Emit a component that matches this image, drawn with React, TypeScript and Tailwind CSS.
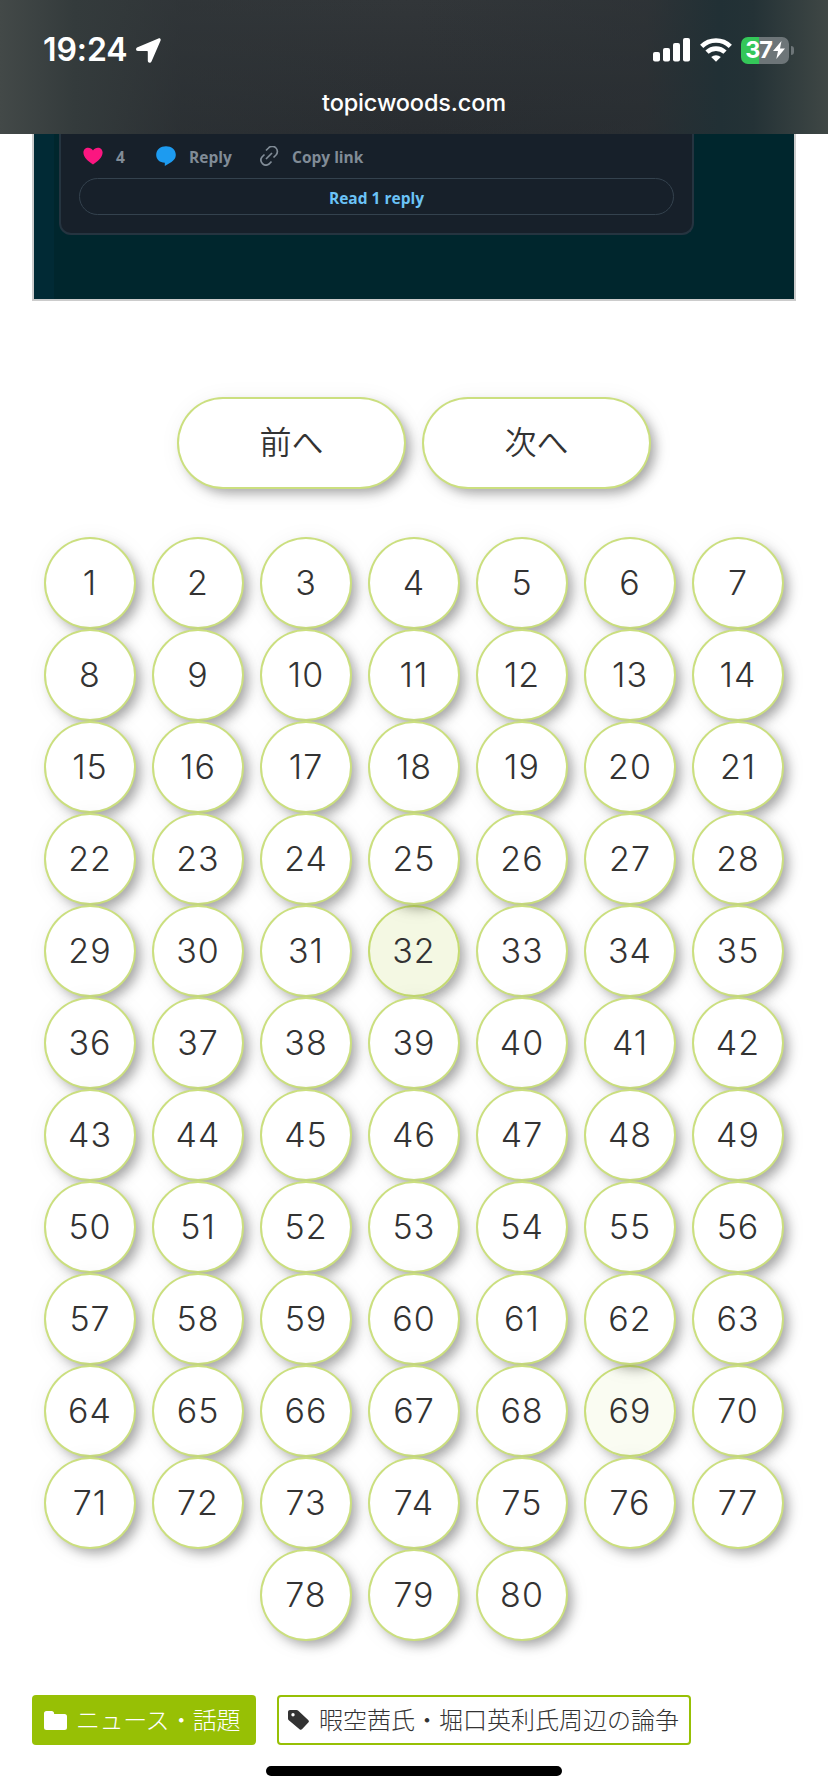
import type { ReactNode } from 'react';

interface PagerLinkProps {
  children: ReactNode;
  className: string;
}

const PAGES = Array.from({ length: 80 }, (_, i) => i + 1);
const CURRENT_PAGE = 32;
const VISITED_PAGE = 69;

const pageBackground = (page: number) => {
  if (page === CURRENT_PAGE) return 'bg-[#97c000]/11';
  if (page === VISITED_PAGE) return 'bg-[#97c000]/5';
  return 'bg-white';
};

const StatusBar = () => (
  <div className="flex h-[86px] items-center justify-between pl-[43px] pr-[34px]">
    <div className="flex items-center gap-[9px]">
      <span className="w-[84px] whitespace-nowrap text-[32px] font-semibold leading-none tracking-[-0.1px]">
        19:24
      </span>
      <svg width="25" height="25" viewBox="0 0 25 25" fill="currentColor">
        <path d="M22.400.5 1 9.600c-1.500.700-1.200 3.300.8 3.300h9c.7 0 1 .3 1 1v8.800c0 2.100 2.700 2.700 3.700.7L24.500 2.800C25.200 1.100 24.100-.2 22.400.5Z" />
      </svg>
    </div>
    <div className="flex items-center">
      <svg width="37" height="24" viewBox="0 0 37 24" fill="currentColor">
        <rect x="0" y="14" width="7" height="9.500" rx="2" />
        <rect x="10" y="10" width="7" height="13.500" rx="2" />
        <rect x="20" y="5" width="7" height="18.500" rx="2" />
        <rect x="30" y="0" width="7" height="23.500" rx="2" />
      </svg>
      <svg className="ml-2.5" width="32" height="24" viewBox="0 0 32 24" fill="none">
        <path d="M1.700 8.300a20.500 20.500 0 0 1 28.600 0" stroke="currentColor" strokeWidth="4.600" />
        <path d="M7 14.200a13 13 0 0 1 18 0" stroke="currentColor" strokeWidth="4.600" />
        <path d="M11.200 19a7.200 7.200 0 0 1 9.600 0L16 23.800Z" fill="currentColor" />
      </svg>
      <div className="ml-[9px] flex h-[27px] w-12 items-center justify-center gap-px rounded-[7px] bg-linear-to-r from-[#34c759] from-[37.500%] to-[#6d7578] to-[37.500%]">
        <span className="text-[23.500px] font-bold leading-none tracking-[-1.200px]">37</span>
        <svg width="12" height="18" viewBox="0 0 12 18" fill="currentColor">
          <path d="M8.500 0 0 10h5L3.300 18 12 7.500H7Z" />
        </svg>
      </div>
      <div className="ml-0.5 h-[9px] w-[3px] rounded-r-full bg-[#6d7578]" />
    </div>
  </div>
);

const BrowserHeader = () => (
  <header className="h-[134px] bg-[linear-gradient(90deg,#434948_0%,#343b3c_9%,#2e343780_22%,transparent_50%,#2a303480_78%,#213035_87%,#243236_91%,#3f4745_100%),linear-gradient(180deg,#323639,#282c30)] pt-[7px] text-white">
    <StatusBar />
    <p className="mt-[-4px] text-center text-[23.500px] font-medium leading-7 tracking-[-0.150px]">
      topicwoods.com
    </p>
  </header>
);

const EmbeddedPost = () => (
  <div className="mx-8 flex h-[167px] border-2 border-t-0 border-[#ccc] bg-[#00262d]">
    <div className="w-5 bg-[#012a35]" />
    <div className="ml-[5px] h-[101px] w-[635px] rounded-b-xl border-2 border-t-0 border-[#253440] bg-[#17202a] px-[18px] font-['Open_Sans',sans-serif] text-[15.500px] font-bold text-[#818c97]">
      <div className="flex h-11 items-center">
        <svg className="ml-1" width="20" height="18" viewBox="0 0 20 18" fill="#fb1680">
          <path d="M10 17.500C5.500 14.700.4 10.500.4 5.600.4 2.700 2.500.7 5.100.7c2 0 3.700.9 4.900 2.900 1.200-2 2.900-2.900 4.900-2.900 2.600 0 4.700 2 4.700 4.900 0 4.900-5.100 9.100-9.600 11.900Z" />
        </svg>
        <span className="ml-[13px] w-10 pt-[3px]">4</span>
        <svg width="20" height="20" viewBox="0 0 20 20" fill="#1d9bf0">
          <path d="M10 .3c5.400 0 9.800 3.400 9.800 8.700 0 3.200-1.900 5.300-4.300 6.900L8.800 19.900v-3.200C3.700 16.600.2 13.400.2 9 .2 3.700 4.600.3 10 .3Z" />
        </svg>
        <span className="ml-[13px] w-[70px] pt-[3px]">Reply</span>
        <svg width="20" height="20" viewBox="0 0 20 20" fill="none" stroke="#818c97" strokeWidth="1.700">
          <path d="M7 4.500 9.500 2a5 5 0 0 1 7.500 7l-2.500 2.500M5.500 8.500 3 11a5 5 0 0 0 7 7l2.500-2.500M7 13l6-6" />
        </svg>
        <span className="ml-[13px] pt-[3px]">Copy link</span>
      </div>
      <div className="flex h-[37px] items-center justify-center rounded-full border-[1.500px] border-[#34424e] pt-1 text-[#6bc3f7]">
        Read 1 reply
      </div>
    </div>
  </div>
);

const PagerLink = ({ children, className }: PagerLinkProps) => (
  <a
    className={`flex h-[92px] items-center justify-center rounded-full border-2 border-[#97c000]/50 shadow-[6px_6px_12px_-2px_rgba(0,0,0,0.33),3px_3px_24px_rgba(0,0,0,0.06)] ${className}`}
  >
    {children}
  </a>
);

const Pagination = () => (
  <nav className="font-[350] text-[#333]">
    <div className="flex justify-center gap-4 text-[32px]">
      <PagerLink className="w-[229px] bg-white">前へ</PagerLink>
      <PagerLink className="w-[229px] bg-white">次へ</PagerLink>
    </div>
    <div className="mx-auto mt-12 flex w-[740px] flex-wrap justify-center gap-x-4 text-[34px] tracking-[1px]">
      {PAGES.map((page) => (
        <PagerLink key={page} className={`w-[92px] pb-0.5 ${pageBackground(page)}`}>
          {page}
        </PagerLink>
      ))}
    </div>
  </nav>
);

const PostTags = () => (
  <div className="flex gap-[21px] px-8 text-[24px] font-light leading-none">
    <a className="flex h-[50px] w-56 items-center gap-[9px] rounded-[4px] bg-[#97c005] pl-3 text-white">
      <svg width="23" height="19" viewBox="0 0 23 19" fill="currentColor">
        <path d="M2.500 0h5.200c1.300 0 2.400 1 2.400 2.300v.7h10.400A2.500 2.500 0 0 1 23 5.500v11a2.500 2.500 0 0 1-2.500 2.500h-18A2.500 2.500 0 0 1 0 16.500v-14A2.500 2.500 0 0 1 2.500 0Z" />
      </svg>
      <span className="whitespace-nowrap pt-0.5 tracking-[-0.4px]">ニュース・話題</span>
    </a>
    <a className="flex h-[50px] w-[414px] items-center gap-2.5 rounded-[4px] border-2 border-[#97c005] pl-[9px] text-[#333]">
      <svg width="21" height="20" viewBox="0 0 21 20" fill="currentColor">
        <path
          fillRule="evenodd"
          d="M2 0h6.500c.7 0 1.300.2 1.800.7l9.900 9.200c.9.800.9 1.900.1 2.700l-6.100 6.500c-.8.900-1.800.9-2.700.1L.8 10.300C.2 9.800 0 9.200 0 8.500V2C0 .9.900 0 2 0Zm3 3a1.700 1.700 0 1 0 0 3.400A1.700 1.700 0 0 0 5 3Z"
        />
      </svg>
      <span className="whitespace-nowrap pt-0.5">暇空茜氏・堀口英利氏周辺の論争</span>
    </a>
  </div>
);

const App = () => {
  return (
    <div className="flex h-[1792px] w-[828px] flex-col overflow-hidden bg-white font-['Inter','Noto_Sans_CJK_JP',sans-serif]">
      <BrowserHeader />
      <EmbeddedPost />
      <main className="mt-24 flex flex-col gap-[54px]">
        <Pagination />
        <PostTags />
      </main>
      <div className="mx-auto mt-[21px] h-2.5 w-[296px] rounded-full bg-black" />
    </div>
  );
};

export default App;
